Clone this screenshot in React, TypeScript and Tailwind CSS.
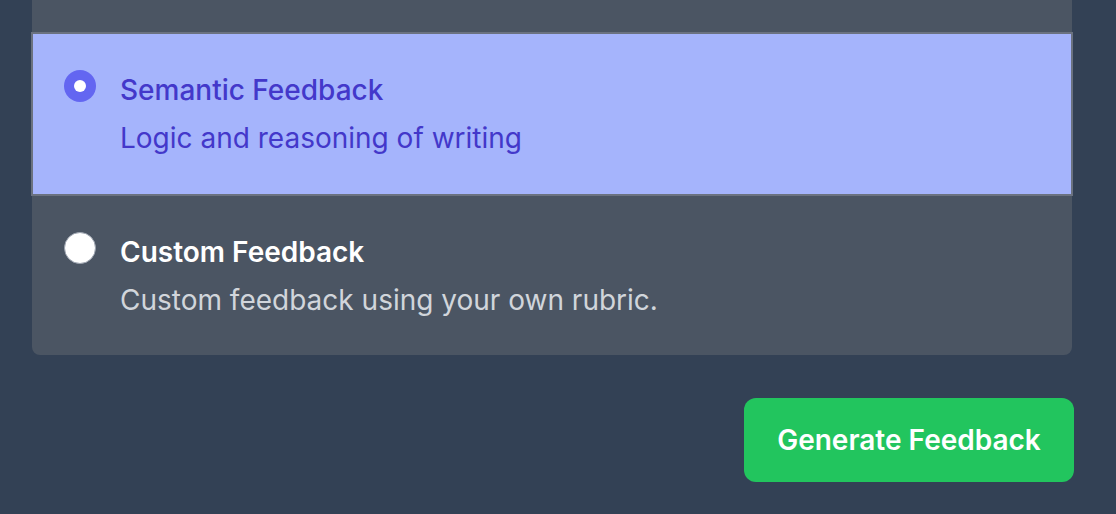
import { useState } from 'react';

interface FeedbackOption {
  id: string;
  title: string;
  description: string;
}

const options: FeedbackOption[] = [
  { id: 'semantic', title: 'Semantic Feedback', description: 'Logic and reasoning of writing' },
  { id: 'custom', title: 'Custom Feedback', description: 'Custom feedback using your own rubric.' },
];

export default function App() {
  const [selected, setSelected] = useState('semantic');

  return (
    <div className="min-h-screen bg-[#334155] pl-[32px] pr-[44px] font-['Inter',sans-serif] antialiased">
      {/* Options card */}
      <div className="rounded-b-[8px] bg-[#4b5563]">
        <div className="h-[32px]" />
        {options.map((opt) => {
          const active = selected === opt.id;
          return (
            <label
              key={opt.id}
              onClick={() => setSelected(opt.id)}
              className={
                active
                  ? '-mx-px flex cursor-pointer gap-[24px] border-2 border-[#6b7280] bg-[#a5b4fc] pl-[31px] pr-[32px] pt-[36px] pb-[36px]'
                  : 'flex cursor-pointer gap-[24px] pl-[32px] pr-[32px] pt-[36px] pb-[35px]'
              }
            >
              <span
                className={
                  active
                    ? 'flex h-[32px] w-[32px] shrink-0 items-center justify-center rounded-full bg-[#6366f1]'
                    : 'flex h-[32px] w-[32px] shrink-0 items-center justify-center rounded-full border border-[#9ca3af] bg-white'
                }
              >
                {active && <span className="h-[12px] w-[12px] rounded-full bg-white" />}
              </span>
              <div className="flex flex-col">
                <span
                  className={
                    active
                      ? 'text-[28px] leading-[40px] font-medium text-[#4338ca]'
                      : 'text-[28px] leading-[40px] font-semibold text-white'
                  }
                >
                  {opt.title}
                </span>
                <span
                  className={
                    active
                      ? 'mt-[8px] text-[28px] leading-[40px] text-[#4338ca]'
                      : 'mt-[8px] text-[28px] leading-[40px] text-[#d1d5db]'
                  }
                >
                  {opt.description}
                </span>
              </div>
            </label>
          );
        })}
      </div>

      {/* Actions */}
      <div className="-mr-[2px] flex justify-end pt-[43px]">
        <button
          type="button"
          className="h-[84px] w-[330px] rounded-[12px] bg-[#22c55e] text-[28px] font-semibold text-white"
        >
          Generate Feedback
        </button>
      </div>
    </div>
  );
}
